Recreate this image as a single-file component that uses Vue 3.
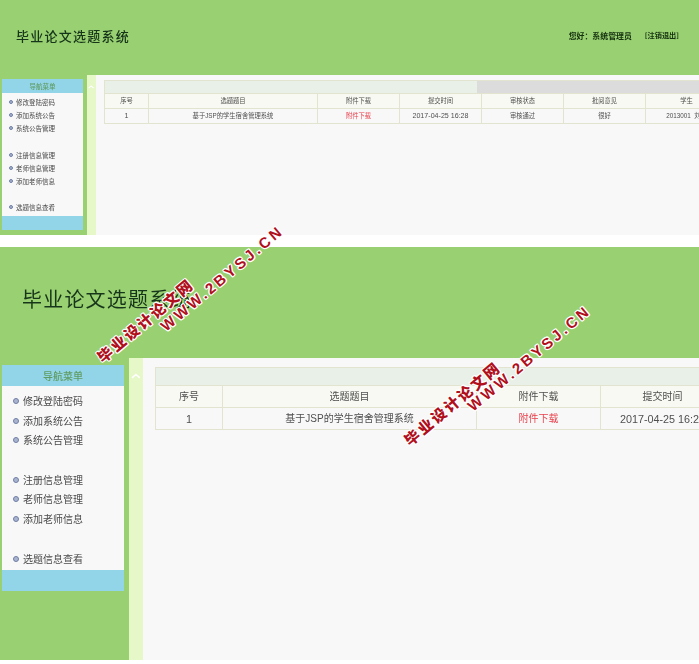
<script setup>
const columns = [
  { title: "序号", value: "1", num: true, small: 44, large: 67 },
  { title: "选题题目", value: "基于JSP的学生宿舍管理系统", small: 169, large: 254 },
  { title: "附件下载", value: "附件下载", link: true, small: 82, large: 124 },
  { title: "提交时间", value: "2017-04-25 16:28", num: true, small: 82, large: 124 },
  { title: "审核状态", value: "审核通过", small: 82, large: 124 },
  { title: "批阅意见", value: "很好", small: 82, large: 124 },
  { title: "学生", value: "2013001  刘东", small: 82, large: 124 },
];

const menuGroups = [
  ["修改登陆密码", "添加系统公告", "系统公告管理"],
  ["注册信息管理", "老师信息管理", "添加老师信息"],
  ["选题信息查看"],
];

const panels = [
  { size: "small", user: true },
  { size: "large", user: false },
];

const marks = [
  { cn: "cn-1", en: "en-1" },
  { cn: "cn-2", en: "en-2" },
];
</script>

<template>
  <div class="page">
    <section v-for="panel in panels" :key="panel.size" class="panel" :class="panel.size">
      <header class="top">
        <h1 class="title">毕业论文选题系统</h1>
        <div v-if="panel.user" class="user">
          <span>您好：系统管理员</span>
          <span class="logout">[注销退出]</span>
        </div>
      </header>
      <div class="main">
        <aside class="side">
          <div class="nav">
            <div class="nav-head">导航菜单</div>
            <div class="nav-body">
              <ul v-for="(group, i) in menuGroups" :key="i" class="group">
                <li v-for="item in group" :key="item" class="item">{{ item }}</li>
              </ul>
            </div>
            <div class="nav-foot"></div>
          </div>
        </aside>
        <div class="strip">
          <svg class="chevron" viewBox="0 0 10 6">
            <path d="M1 5 L5 1.5 L9 5" fill="none" stroke="#fff" stroke-width="1.6" />
          </svg>
        </div>
        <div class="content">
          <table class="grid">
            <colgroup>
              <col v-for="col in columns" :key="col.title" :style="{ width: col[panel.size] + 'px' }" />
            </colgroup>
            <thead>
              <tr>
                <th class="bar" :colspan="columns.length">
                  <div class="bar-inner"><span class="bar-fill"></span></div>
                </th>
              </tr>
              <tr>
                <th v-for="col in columns" :key="col.title">{{ col.title }}</th>
              </tr>
            </thead>
            <tbody>
              <tr>
                <td v-for="col in columns" :key="col.title" :class="{ link: col.link, num: col.num }">{{ col.value }}</td>
              </tr>
            </tbody>
          </table>
        </div>
      </div>
    </section>

    <template v-for="mark in marks" :key="mark.cn">
      <div class="mark mark-cn" :class="mark.cn">毕业设计论文网</div>
      <div class="mark mark-en" :class="mark.en">WWW.2BYSJ.CN</div>
    </template>
  </div>
</template>

<style scoped>
.page {
  position: relative;
  width: 699px;
  height: 664px;
  overflow: hidden;
  background: #fff;
  font-family: "Noto Sans CJK SC", "Liberation Sans", sans-serif;
  color: #555;
}

.panel {
  background: #99d071;
  overflow: hidden;
  filter: blur(0.4px);
}

.panel.large {
  margin-top: 12px;
}

.top {
  display: flex;
  align-items: center;
  justify-content: space-between;
}

.title {
  margin: 0;
  font-weight: 500;
  color: #16351a;
}

.small .top {
  height: 75px;
  padding: 0 20px 5px 16px;
  box-sizing: border-box;
}

.small .title {
  font-size: 13px;
  letter-spacing: 1.25px;
}

.large .top {
  height: 111px;
  padding: 0 0 8px 22px;
  box-sizing: border-box;
}

.large .title {
  font-size: 20px;
  letter-spacing: 1.2px;
  font-weight: 400;
}

.user {
  display: flex;
  align-items: center;
  gap: 13px;
  font-size: 7.9px;
  font-weight: 700;
  color: #13300f;
}

.logout {
  font-size: 7.2px;
}

.main {
  display: flex;
}

.small .main {
  height: 160px;
}

.large .main {
  height: 302px;
}

.side {
  flex: none;
  box-sizing: border-box;
}

.small .side {
  width: 87px;
  padding: 4px 4px 0 2px;
}

.large .side {
  width: 129px;
  padding: 7px 5px 0 2px;
}

.nav-head,
.nav-foot {
  background: #93d5e8;
}

.nav-head {
  text-align: center;
  color: #5f9c63;
  font-weight: 500;
}

.small .nav-head {
  height: 14px;
  font-size: 6.5px;
  line-height: 14px;
}

.large .nav-head {
  height: 21px;
  font-size: 10px;
  line-height: 21px;
}

.small .nav-foot {
  height: 14px;
}

.large .nav-foot {
  height: 21px;
}

.nav-body {
  background: #f8f8f8;
  box-sizing: border-box;
}

.small .nav-body {
  height: 123px;
  padding-top: 3px;
}

.large .nav-body {
  height: 184px;
  padding-top: 5px;
}

.group {
  list-style: none;
  margin: 0;
  padding: 0;
}

.small .group {
  margin-bottom: 13px;
}

.large .group {
  margin-bottom: 20px;
}

.item {
  position: relative;
  color: #4a4a4a;
}

.item::before {
  content: "";
  position: absolute;
  box-sizing: border-box;
  border-radius: 50%;
  background: #aab4d0;
  border: 1px solid #6f80a6;
}

.small .item {
  height: 13.2px;
  line-height: 13.2px;
  padding-left: 14px;
  font-size: 6.5px;
}

.small .item::before {
  left: 7px;
  top: 4px;
  width: 4px;
  height: 4px;
}

.large .item {
  height: 19.6px;
  line-height: 19.6px;
  padding-left: 21px;
  font-size: 10px;
}

.large .item::before {
  left: 11px;
  top: 7px;
  width: 6px;
  height: 6px;
}

.strip {
  flex: none;
  background: #e6f7c8;
}

.small .strip {
  width: 9px;
  padding-top: 10px;
}

.large .strip {
  width: 14px;
  padding-top: 15px;
}

.chevron {
  display: block;
  margin: 0 auto;
  width: 70%;
}

.content {
  flex: 1;
  min-width: 0;
  background: #f8f8f8;
  overflow: hidden;
}

.small .content {
  padding: 5px 0 0 8px;
}

.large .content {
  padding: 9px 0 0 12px;
}

.grid {
  table-layout: fixed;
  border-collapse: collapse;
  width: 0;
  text-align: center;
  font-family: "Liberation Sans", "Noto Sans CJK SC", sans-serif;
}

.grid th,
.grid td {
  padding: 0;
  border: 1px solid #e2e4cf;
  font-weight: 400;
  color: #4f4f4f;
  white-space: pre;
  overflow: hidden;
}

.grid th {
  background: #f9f9f3;
}

.grid td.link {
  color: #e8404c;
}

.small .grid th,
.small .grid td {
  height: 14px;
  font-size: 6.3px;
  line-height: 12px;
}

.small .grid td.num {
  font-size: 7.1px;
}

.large .grid th,
.large .grid td {
  height: 21px;
  font-size: 10px;
  line-height: 20px;
}

.large .grid td.num {
  font-size: 10.8px;
}

.grid th.bar {
  background: #dcdcdc;
}

.small .grid th.bar {
  height: 12px;
}

.large .grid th.bar {
  height: 17px;
}

.bar-inner {
  display: flex;
  height: 100%;
}

.bar-fill {
  display: block;
  background: #e9f0e8;
}

.small .bar-inner {
  height: 12px;
}

.small .bar-fill {
  width: 372px;
}

.large .bar-inner {
  height: 17px;
}

.large .bar-fill {
  width: 100%;
}

.mark {
  position: absolute;
  transform: translate(-50%, -50%) rotate(-40deg);
  white-space: nowrap;
  font-weight: 900;
  color: #b00f1c;
  text-shadow:
    1px 0 0 #fff,
    -1px 0 0 #fff,
    0 1px 0 #fff,
    0 -1px 0 #fff,
    1px 1px 0 #fff,
    -1px -1px 0 #fff,
    1px -1px 0 #fff,
    -1px 1px 0 #fff;
}

.mark-cn {
  font-size: 15px;
  letter-spacing: 2.2px;
}

.mark-en {
  font-family: "Liberation Sans", sans-serif;
  font-weight: 700;
  font-size: 15px;
  letter-spacing: 3px;
}

.cn-1 {
  left: 145px;
  top: 320px;
}

.en-1 {
  left: 222px;
  top: 278px;
}

.cn-2 {
  left: 452px;
  top: 403px;
}

.en-2 {
  left: 529px;
  top: 358px;
}
</style>
